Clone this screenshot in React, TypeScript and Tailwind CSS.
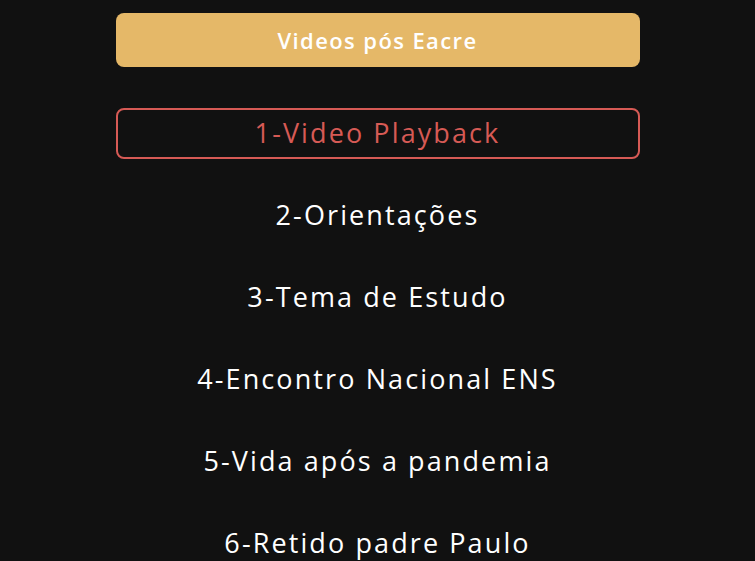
const items = [
  "1-Video Playback",
  "2-Orientações",
  "3-Tema de Estudo",
  "4-Encontro Nacional ENS",
  "5-Vida após a pandemia",
  "6-Retido padre Paulo",
];

export default function App() {
  return (
    <div
      className="bg-[#111111] min-h-screen h-[561px] overflow-hidden"
      style={{ fontFamily: '"Open Sans", "Liberation Sans", sans-serif' }}
    >
      <div className="w-[524px] mx-auto pt-[13px]">
        <button className="w-full h-[54px] rounded-lg bg-[#e5b868] text-white text-[22px] font-semibold tracking-[1.4px]">
          Videos pós Eacre
        </button>
        <div className="mt-[41px] flex flex-col gap-[31px]">
          {items.map((item, i) => (
            <div
              key={item}
              className={
                i === 0
                  ? "h-[51px] flex items-center justify-center rounded-lg border-2 border-[#d65a55] text-[#d65a55] text-[27px] font-normal tracking-[2.1px]"
                  : "h-[51px] flex items-center justify-center text-white text-[27px] font-normal tracking-[2.1px]"
              }
            >
              {item}
            </div>
          ))}
        </div>
      </div>
    </div>
  );
}
